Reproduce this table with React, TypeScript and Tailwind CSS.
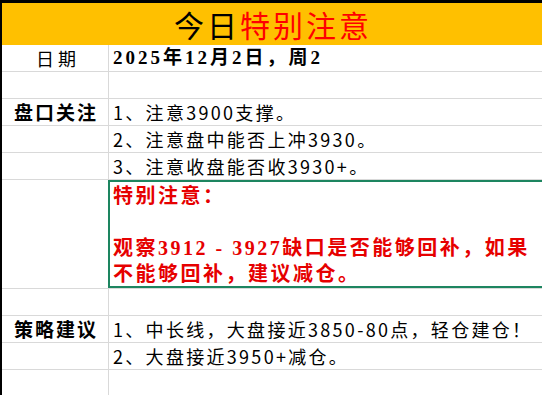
const cjk = "font-['Noto_Sans_CJK_SC',sans-serif]";
const serif = "font-['Liberation_Serif','Noto_Sans_CJK_SC',serif]";

function Row({ label, children, bold }: { label?: string; children?: React.ReactNode; bold?: boolean }) {
  return (
    <div className="flex h-[27px] border-b border-[#d9d9d9]">
      <div
        className={`w-[107px] shrink-0 border-r border-[#d9d9d9] flex items-center justify-center text-[19px] tracking-[2px] pl-[2px] ${
          bold ? 'font-bold' : 'font-medium'
        }`}
      >
        {label}
      </div>
      <div className="flex-1 flex items-center pl-[4px] whitespace-nowrap text-[18px] tracking-[2.3px]">
        {children}
      </div>
    </div>
  );
}

export default function App() {
  return (
    <div className={`w-[542px] h-[395px] overflow-hidden bg-white text-black ${cjk}`}>
      <div className="w-[546px] h-[395px] border-t-[3px] border-l-2 border-black">
        <div className="h-[42px] bg-[#ffc000] flex items-center justify-center pr-[2px] text-[30px] tracking-[3px] leading-none">
          今日<span className="text-[#ff0000]">特别注意</span>
        </div>

        <div className="flex h-[27px] border-b border-[#d9d9d9]">
          <div className="w-[107px] shrink-0 border-r border-[#d9d9d9] flex items-center justify-center text-[18px] tracking-[4px] pl-[6px]">
            日期
          </div>
          <div className={`flex-1 flex items-center pl-[4px] whitespace-nowrap text-[19px] font-bold tracking-[3px] ${serif}`}>
            2025年12月2日，周2
          </div>
        </div>

        <Row />
        <Row label="盘口关注" bold>1、注意3900支撑。</Row>
        <Row>2、注意盘中能否上冲3930。</Row>
        <Row>3、注意收盘能否收3930+。</Row>

        <div className="flex h-[109px] border-b border-[#d9d9d9]">
          <div className="w-[106px] shrink-0" />
          <div className="relative flex-1 border-2 border-[#1d8560]">
            <div
              className={`pt-[1px] pl-[3px] h-full overflow-hidden leading-[26px] text-[20px] font-bold tracking-[2.5px] text-[#e60000] whitespace-nowrap ${serif}`}
            >
              特别注意：
              <br />
              <br />
              观察3912 - 3927缺口是否能够回补，如果
              <br />
              不能够回补，建议减仓。
            </div>
            <div className="absolute -bottom-[4px] -right-[4px] w-[6px] h-[6px] bg-[#1d8560] border border-white" />
          </div>
        </div>

        <Row />
        <Row label="策略建议" bold>1、中长线，大盘接近3850-80点，轻仓建仓！</Row>
        <Row>2、大盘接近3950+减仓。</Row>
        <Row />
      </div>
    </div>
  );
}
